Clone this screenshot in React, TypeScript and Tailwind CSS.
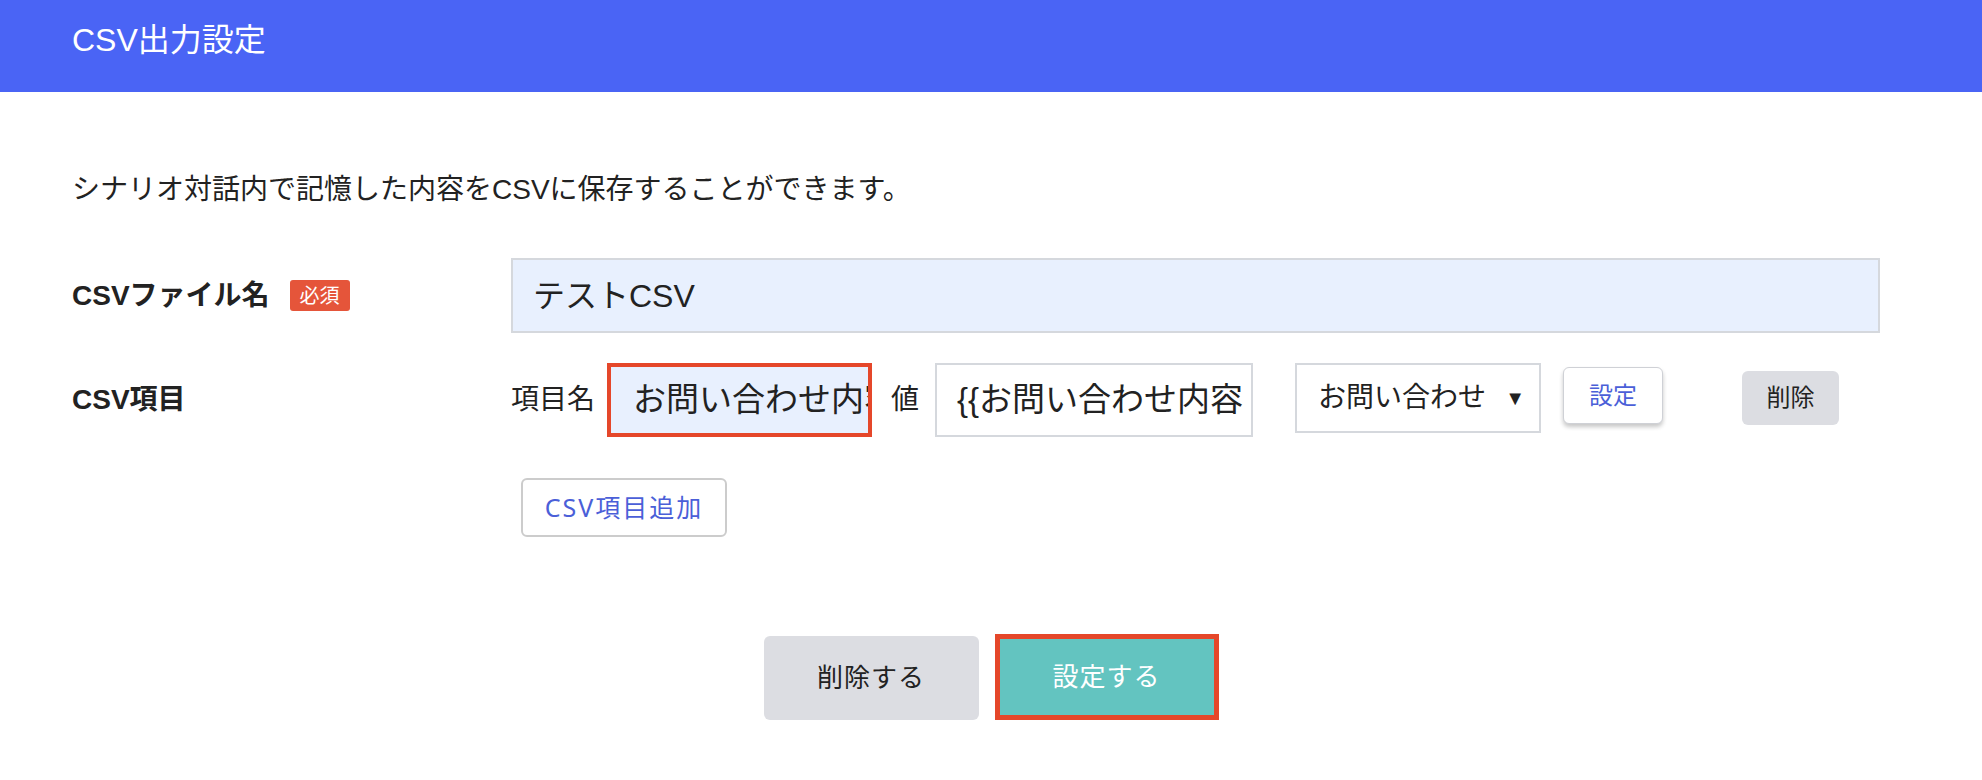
import React from 'react';

const FONT = "font-['Liberation_Sans','Noto_Sans_CJK_JP',sans-serif]";

const App: React.FC = () => {
  return (
    <div className={`w-[1982px] h-[780px] bg-white text-[#222] ${FONT}`}>
      {/* Header */}
      <header className="h-[92px] bg-[#4a64f5] pl-[72px] pb-[12px] flex items-center">
        <h1 className="text-[32px] leading-none text-white font-normal">CSV出力設定</h1>
      </header>

      <div className="pl-[72px]">
        <p className="mt-[80px] text-[28px] leading-[36px]">
          シナリオ対話内で記憶した内容をCSVに保存することができます。
        </p>

        {/* CSV file name */}
        <div className="mt-[50px] flex items-center">
          <div className="w-[439px] flex items-center">
            <span className="text-[28px] font-bold leading-none">CSVファイル名</span>
            <span className="ml-[20px] h-[31px] w-[60px] rounded-[3px] bg-[#e5553a] text-white text-[20px] flex items-center justify-center">
              必須
            </span>
          </div>
          <div className="h-[75px] w-[1369px] border-2 border-[#d5d8dd] bg-[#e8f0fe] pl-[20px] flex items-center text-[32px]">
            テストCSV
          </div>
        </div>

        {/* CSV items */}
        <div className="mt-[30px] flex items-start">
          <div className="w-[439px] h-[74px] flex items-center">
            <span className="text-[28px] font-bold leading-none">CSV項目</span>
          </div>
          <span className="h-[74px] flex items-center text-[28px] w-[84px]">項目名</span>
          <div className="ml-[12px] h-[74px] w-[265px] border-4 border-[#e5472a] bg-[#e8f0fe] pl-[22px] pr-[6px] flex items-center overflow-hidden whitespace-nowrap text-[33px]">
            お問い合わせ内容
          </div>
          <span className="ml-[19px] h-[74px] flex items-center text-[28px]">値</span>
          <div className="ml-[16px] h-[74px] w-[318px] border-2 border-[#d5d8dd] bg-white pl-[20px] flex items-center overflow-hidden whitespace-nowrap text-[33px]">
            {'{{お問い合わせ内容'}
          </div>
          <div className="ml-[42px] h-[70px] w-[246px] border-2 border-[#d5d8dd] bg-white pl-[21px] pr-[14px] flex items-center justify-between text-[28px]">
            <span>お問い合わせ</span>
            <span className="text-[20px]">▼</span>
          </div>
          <button className="ml-[22px] mt-[4px] h-[57px] w-[100px] rounded-[6px] border border-[#cfd1d6] bg-white text-[24px] text-[#4b5fd8] shadow-[0_3px_4px_rgba(0,0,0,0.22)]">
            設定
          </button>
          <button className="ml-[79px] mt-[8px] h-[54px] w-[97px] rounded-[6px] bg-[#dcdde2] text-[24px] text-[#222]">
            削除
          </button>
        </div>

        {/* Add item */}
        <button className="mt-[41px] ml-[449px] h-[59px] w-[206px] rounded-[6px] border-2 border-[#cccccc] bg-white text-[25px] tracking-[2px] text-[#4b5fd8] font-['Noto_Sans','Noto_Sans_CJK_JP',sans-serif]">
          CSV項目追加
        </button>
      </div>

      {/* Footer buttons */}
      <div className="mt-[99px] flex justify-center gap-[16px]">
        <button className="h-[84px] w-[215px] rounded-[6px] bg-[#dcdde2] text-[26px] tracking-[1px] text-[#222]">
          削除する
        </button>
        <button className="h-[86px] w-[224px] -mt-[2px] border-[5px] border-[#e5472a] bg-[#63c4c0] text-[26px] tracking-[1px] text-white">
          設定する
        </button>
      </div>
    </div>
  );
};

export default App;
